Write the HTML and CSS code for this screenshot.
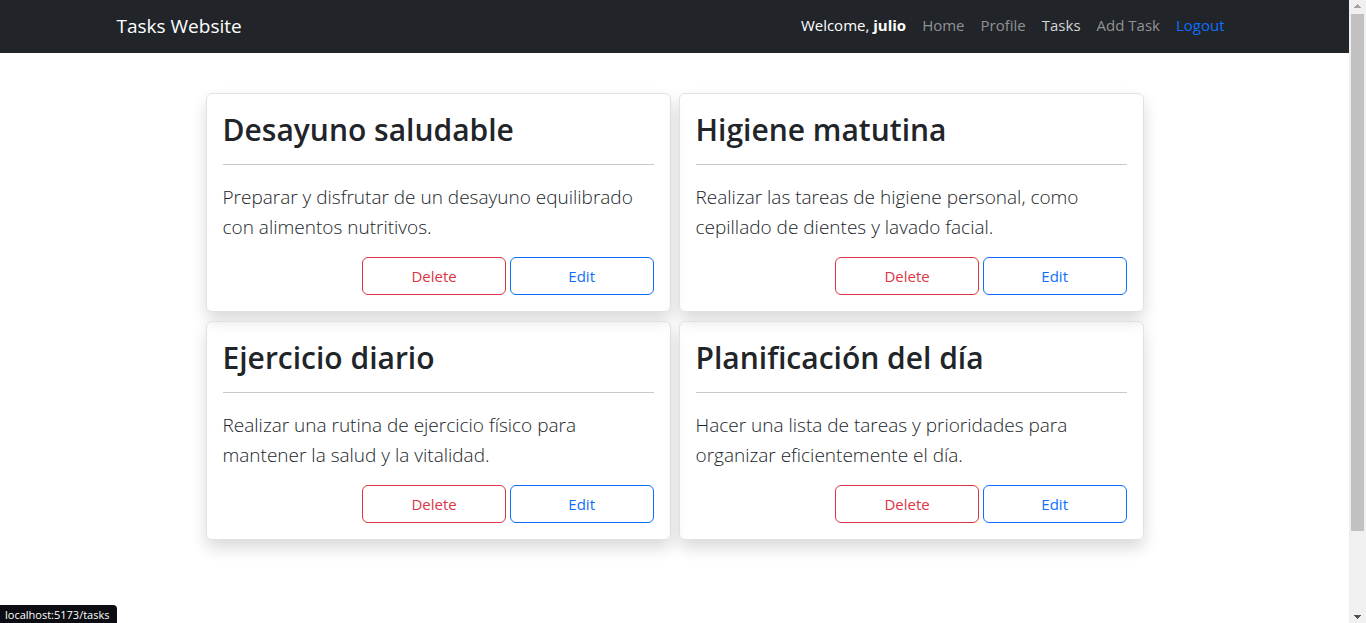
FILE: index.html
```html
<!DOCTYPE html>
<html lang="es">
<head>
<meta charset="utf-8">
<meta name="viewport" content="width=device-width, initial-scale=1">
<title>Tasks Website</title>
<link rel="stylesheet" href="styles.css">
</head>
<body>
<div class="page">
  <header class="navbar">
    <div class="container">
      <a class="brand" href="#">Tasks Website</a>
      <nav class="nav">
        <span class="welcome">Welcome, <strong>julio</strong></span>
        <a class="nav-link" href="#">Home</a>
        <a class="nav-link" href="#">Profile</a>
        <a class="nav-link active" href="#">Tasks</a>
        <a class="nav-link" href="#">Add Task</a>
        <a class="nav-link logout" href="#">Logout</a>
      </nav>
    </div>
  </header>
  <main class="tasks">
    <article class="card">
      <h2 class="card-title">Desayuno saludable</h2>
      <hr class="rule">
      <p class="card-text">Preparar y disfrutar de un desayuno equilibrado con alimentos nutritivos.</p>
      <div class="actions">
        <button class="btn danger" type="button">Delete</button>
        <button class="btn primary" type="button">Edit</button>
      </div>
    </article>
    <article class="card">
      <h2 class="card-title">Higiene matutina</h2>
      <hr class="rule">
      <p class="card-text">Realizar las tareas de higiene personal, como cepillado de dientes y lavado facial.</p>
      <div class="actions">
        <button class="btn danger" type="button">Delete</button>
        <button class="btn primary" type="button">Edit</button>
      </div>
    </article>
    <article class="card">
      <h2 class="card-title">Ejercicio diario</h2>
      <hr class="rule">
      <p class="card-text">Realizar una rutina de ejercicio físico para mantener la salud y la vitalidad.</p>
      <div class="actions">
        <button class="btn danger" type="button">Delete</button>
        <button class="btn primary" type="button">Edit</button>
      </div>
    </article>
    <article class="card">
      <h2 class="card-title">Planificación del día</h2>
      <hr class="rule">
      <p class="card-text">Hacer una lista de tareas y prioridades para organizar eficientemente el día.</p>
      <div class="actions">
        <button class="btn danger" type="button">Delete</button>
        <button class="btn primary" type="button">Edit</button>
      </div>
    </article>
  </main>
</div>
<div class="scrollbar" aria-hidden="true">
  <svg class="arrow up" width="17" height="14" viewBox="0 0 17 14" shape-rendering="crispEdges"><path d="M8 4h1v1h1v1h1v1h1v1H5V7h1V6h1V5h1z"/></svg>
  <div class="thumb"></div>
  <svg class="arrow down" width="17" height="14" viewBox="0 0 17 14" shape-rendering="crispEdges"><path d="M5 6h7v1h-1v1h-1v1H9v1H8V9H7V8H6V7H5z"/></svg>
</div>
<div class="status">localhost:5173/tasks</div>
</body>
</html>
```

FILE: styles.css
```css
* { box-sizing: border-box; }

body {
  display: grid;
  grid-template-columns: 1fr 17px;
  min-height: 100vh;
  margin: 0;
  background: #fff;
  color: #212529;
  font-family: "Segoe UI", "Open Sans", "Noto Sans", sans-serif;
  font-size: 15px;
  line-height: 24px;
}

a { text-decoration: none; }

.navbar {
  padding: 6px 0 7px;
  background: #212529;
}

.container {
  display: flex;
  align-items: center;
  justify-content: space-between;
  max-width: 1140px;
  margin: 0 auto;
  padding: 0 12px;
}

.brand {
  padding: 5px 0;
  color: #fff;
  font-size: 19px;
  line-height: 30px;
}

.nav {
  display: flex;
  gap: 16px;
  padding: 0 8px 2px 0;
}

.welcome { color: #fff; }
.nav-link { color: #909294; }
.nav-link.active { color: #d3d4d5; }
.nav-link.logout { color: #0d6efd; }

.tasks {
  display: grid;
  grid-template-columns: 1fr 1fr;
  gap: 9px 8px;
  max-width: 938px;
  margin: 40px auto;
}

.card {
  padding: 16px;
  border: 1px solid #dee2e6;
  border-radius: 6px;
  box-shadow: 0 8px 16px rgba(0, 0, 0, 0.15);
}

.card-title {
  margin: 0;
  padding-top: 2px;
  font-size: 30px;
  font-weight: 600;
  line-height: 36px;
}

.rule {
  margin: 16px 0;
  border: 0;
  border-top: 1px solid #c8c9ca;
}

.card-text {
  margin: 0;
  padding: 1px 0 15px;
  font-size: 19px;
  font-weight: 300;
  line-height: 30px;
}

.actions {
  display: flex;
  justify-content: flex-end;
  gap: 4px;
}

.btn {
  width: 33.33%;
  padding: 6px 12px;
  border: 1px solid;
  border-radius: 6px;
  background: transparent;
  font: inherit;
}

.btn.danger { color: #dc3545; }
.btn.primary { color: #0d6efd; }

.scrollbar {
  display: flex;
  flex-direction: column;
  background: #f0f0f0;
}

.arrow { display: block; }
.arrow.up { fill: #a3a3a3; }
.arrow.down {
  margin-top: auto;
  fill: #505050;
}

.thumb {
  height: 83%;
  margin: 0 2px;
  background: #c1c1c1;
}

.status {
  position: fixed;
  bottom: 0;
  left: 0;
  padding: 2px 8px 0 5px;
  border-radius: 0 4px 0 0;
  background: #0b0d12;
  color: #fff;
  font-size: 11px;
  line-height: 16px;
}
```
